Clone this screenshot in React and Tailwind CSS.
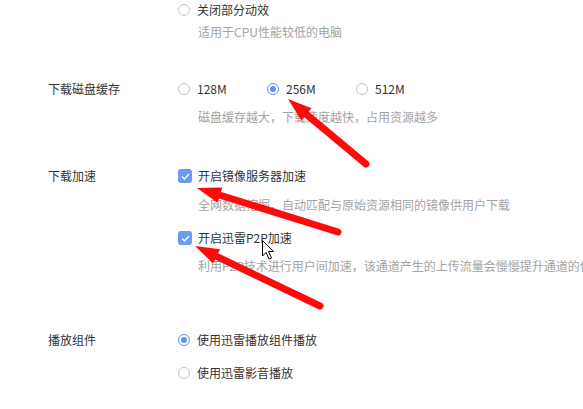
import React from "react";

const Radio = ({ checked, label }) => (
  <div className="flex h-5 items-center">
    <span
      className={
        checked
          ? "flex h-3 w-3 items-center justify-center rounded-full border border-[#5b8ff9] bg-white"
          : "h-3 w-3 rounded-full border border-[#c4c4c4] bg-white"
      }
    >
      {checked && <span className="h-[6px] w-[6px] rounded-full bg-[#5b8ff9]" />}
    </span>
    <span className="ml-[7px] text-[12px] text-[#333]">{label}</span>
  </div>
);

const Checkbox = ({ label, className = "" }) => (
  <div className={`flex h-5 items-center ${className}`}>
    <span className="flex h-[14px] w-[14px] items-center justify-center rounded-[3px] bg-[#6a9bf6]">
      <svg width="9" height="7" viewBox="0 0 9 7" fill="none">
        <path d="M1 3.5 L3.5 6 L8 1" stroke="#fff" strokeWidth="1.3" />
      </svg>
    </span>
    <span className="ml-[6px] text-[12px] text-[#333]">{label}</span>
  </div>
);

const Desc = ({ children, className = "" }) => (
  <div className={`flex h-5 items-center whitespace-nowrap pl-5 text-[12px] text-[#a3a3a3] ${className}`}>
    {children}
  </div>
);

const Row = ({ label, children, className = "" }) => (
  <div className={`flex ${className}`}>
    <div className="flex h-5 w-[130px] shrink-0 items-center text-[12px] text-[#333]">{label}</div>
    <div className="flex min-w-0 flex-col">{children}</div>
  </div>
);

const arrows = [
  { tip: [288, 99], tail: [366, 164] },
  { tip: [197, 188], tail: [338, 232] },
  { tip: [195, 246], tail: [320, 306] },
];

const Arrow = ({ tip, tail }) => {
  const dx = tail[0] - tip[0];
  const dy = tail[1] - tip[1];
  const len = Math.hypot(dx, dy);
  const ux = dx / len;
  const uy = dy / len;
  const nx = -uy;
  const ny = ux;
  const headLen = 24;
  const half = 8;
  const bx = tip[0] + ux * headLen;
  const by = tip[1] + uy * headLen;
  const pts = [
    [tip[0], tip[1]],
    [bx + nx * half, by + ny * half],
    [bx - nx * half, by - ny * half],
  ]
    .map((p) => p.join(","))
    .join(" ");
  return (
    <g>
      <line
        x1={tip[0] + ux * 16}
        y1={tip[1] + uy * 16}
        x2={tail[0]}
        y2={tail[1]}
        stroke="#ff0a0a"
        strokeWidth="7"
        strokeLinecap="round"
      />
      <polygon points={pts} fill="#ff0a0a" />
    </g>
  );
};

export default function App() {
  return (
    <div
      className="relative h-[409px] w-[583px] overflow-hidden bg-white pl-12"
      style={{ fontFamily: '"Noto Sans CJK SC", "Noto Sans", sans-serif' }}
    >
      <Row label="">
        <Radio label="关闭部分动效" />
        <Desc className="mt-[2px]">适用于CPU性能较低的电脑</Desc>
      </Row>

      <Row label="下载磁盘缓存" className="mt-[37px]">
        <div className="flex">
          <div className="w-[89px]">
            <Radio label="128M" />
          </div>
          <div className="w-[89px]">
            <Radio checked label="256M" />
          </div>
          <div className="w-[89px]">
            <Radio label="512M" />
          </div>
        </div>
        <Desc className="mt-2">磁盘缓存越大，下载速度越快，占用资源越多</Desc>
      </Row>

      <Row label="下载加速" className="mt-[39px]">
        <Checkbox label="开启镜像服务器加速" />
        <Desc className="mt-[9px]">全网数据挖掘，自动匹配与原始资源相同的镜像供用户下载</Desc>
        <Checkbox label="开启迅雷P2P加速" className="mt-[13px]" />
        <Desc className="mt-2">利用P2P技术进行用户间加速，该通道产生的上传流量会慢慢提升通道的使用率</Desc>
      </Row>

      <Row label="播放组件" className="mt-[54px]">
        <Radio checked label="使用迅雷播放组件播放" />
        <div className="mt-[13px]">
          <Radio label="使用迅雷影音播放" />
        </div>
      </Row>

      <svg className="pointer-events-none absolute left-0 top-0" width="583" height="409">
        {arrows.map((a, i) => (
          <Arrow key={i} {...a} />
        ))}
        <path
          d="M262.5 240.5 L262.5 256 L266 252.5 L269 259 L271.5 258 L268.5 251.5 L273.5 251.5 Z"
          fill="#fff"
          stroke="#000"
          strokeWidth="1"
          strokeLinejoin="round"
        />
      </svg>
    </div>
  );
}
